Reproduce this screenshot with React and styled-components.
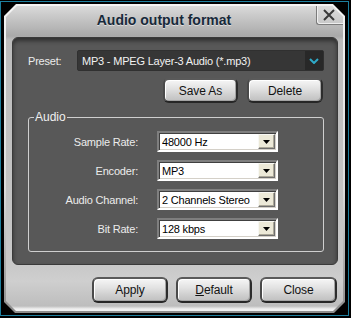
import React from "react";
import styled, { createGlobalStyle } from "styled-components";

const Global = createGlobalStyle`
  html, body { margin: 0; padding: 0; background: #000; }
  body { font-family: "Liberation Sans", Arial, sans-serif; }
  * { box-sizing: border-box; }
`;

const Glow = styled.div`
  margin-top: 1px;
  width: 349px;
  border: 1px solid #1d7f9e;
  padding: 2px 3px 2px 3px;
`;

const chamfer = (a, b) =>
  `polygon(${a}px 0, calc(100% - ${a}px) 0, 100% ${a}px, 100% calc(100% - ${b}px), calc(100% - ${b}px) 100%, ${b}px 100%, 0 calc(100% - ${b}px), 0 ${a}px)`;

const FrameOuter = styled.div`
  width: 341px;
  height: 309px;
  padding: 2px;
  background: linear-gradient(#f4f4f4, #dcdcdc 60%, #8c8c8c);
  clip-path: ${chamfer(12, 11)};
`;

const FrameInner = styled.div`
  height: 100%;
  display: flex;
  flex-direction: column;
  clip-path: ${chamfer(11, 10)};
  background: linear-gradient(
    #dadada 0px,
    #c6c6c6 12px,
    #a9a9a9 30px,
    #bcbcbc 34px,
    #c4c4c4 200px,
    #c9c9c9 262px,
    #cfcfcf 275px,
    #bdbdbd 300px,
    #f0f0f0 303px,
    #f0f0f0 305px
  );
`;

const TitleBar = styled.div`
  height: 31px;
  display: flex;
  align-items: flex-start;
`;

const Title = styled.div`
  flex: 1;
  padding: 5px 0 0 6px;
  text-align: center;
  font-family: "Liberation Sans", Arial, sans-serif;
  font-weight: 700;
  font-size: 14px;
  line-height: 18px;
  color: #17293a;
  text-shadow: 0 1px 0 rgba(255, 255, 255, 0.55);
`;

const CloseBox = styled.div`
  width: 27px;
  height: 21px;
  margin-top: -2px;
  border-left: 1px solid #7c7c7c;
  border-bottom: 1px solid #7c7c7c;
  border-bottom-left-radius: 3px;
  box-shadow: inset 1px -1px 0 #eeeeee;
  background: linear-gradient(#dedede, #c8c8c8);
  display: flex;
  align-items: center;
  justify-content: center;
  padding: 2px 2px 0 0;
`;

const Panel = styled.div`
  margin: 0 5px 0 6px;
  height: 228px;
  background: #585858;
  border: 1px solid #3a3a3a;
  border-radius: 6px;
  box-shadow: inset 0 3px 4px rgba(0, 0, 0, 0.45);
  padding: 12px 13px 0 15px;
  display: flex;
  flex-direction: column;
`;

const PresetRow = styled.div`
  display: flex;
  align-items: center;
  height: 21px;
`;

const Label = styled.span`
  color: #ececec;
  font-size: 11px;
  letter-spacing: -0.2px;
  white-space: nowrap;
`;

const PresetLabel = styled(Label)`
  width: 49px;
`;

const DarkSelect = styled.div`
  flex: 1;
  height: 21px;
  display: flex;
  align-items: center;
  background: #363636;
  border: 1px solid #303030;
  border-radius: 2px;
  color: #f2f2f2;
  font-size: 11px;
  letter-spacing: -0.2px;
  padding-left: 4px;
`;

const DarkSelectText = styled.span`
  flex: 1;
  white-space: nowrap;
`;

const Chevron = styled.div`
  width: 18px;
  height: 19px;
  background: #282828;
  display: flex;
  align-items: center;
  justify-content: center;
`;

const ButtonRow = styled.div`
  display: flex;
  justify-content: flex-end;
  gap: 9px;
  margin-top: 7px;
  padding-right: 1px;
`;

const Btn = styled.button`
  width: ${(p) => p.$w}px;
  height: ${(p) => p.$h}px;
  padding: 0;
  border: 2px solid;
  border-color: #5a5a5a #2c2c2c #262626 #4a4a4a;
  border-radius: 6px;
  background: linear-gradient(#f6f6f6, #e2e2e2 40%, #cdcdcd 75%, #c0c0c0);
  box-shadow: inset 1px 1px 0 #ffffff, inset -1px -1px 0 #a4a4a4;
  font-family: "Liberation Sans", Arial, sans-serif;
  font-size: 12px;
  letter-spacing: -0.1px;
  color: #121212;
`;

const Group = styled.div`
  position: relative;
  margin-top: 14px;
  height: 135px;
  width: 296px;
  border: 1px solid #cfcfcf;
  border-radius: 3px;
  padding-top: 13px;
  display: grid;
  grid-template-columns: 109px 121px;
  column-gap: 19px;
  row-gap: 8px;
  grid-auto-rows: 21px;
  align-content: start;
`;

const Legend = styled.span`
  position: absolute;
  top: -8px;
  left: 5px;
  padding: 0 1px;
  background: #585858;
  color: #f0f0f0;
  font-size: 12px;
  line-height: 14px;
`;

const RowLabel = styled(Label)`
  text-align: right;
  align-self: center;
`;

const Combo = styled.div`
  height: 21px;
  display: flex;
  align-items: center;
  background: #fff;
  border: 2px solid;
  border-color: #7f7f7f #ffffff #ffffff #7f7f7f;
  box-shadow: inset 1px 1px 0 #404040, inset -1px -1px 0 #d4d0c8;
  padding: 0 1px 0 3px;
  font-size: 11px;
  letter-spacing: -0.2px;
  color: #000;
`;

const ComboText = styled.span`
  flex: 1;
  white-space: nowrap;
  overflow: hidden;
`;

const ComboBtn = styled.div`
  flex: none;
  width: 17px;
  height: 15px;
  background: #ece9d8;
  border: 1px solid;
  border-color: #f8f8f4 #6e6e6e #6e6e6e #f8f8f4;
  box-shadow: inset -1px -1px 0 #aca899;
  display: flex;
  align-items: center;
  justify-content: center;
`;

const Footer = styled.div`
  flex: 1;
  display: flex;
  justify-content: flex-end;
  align-items: flex-start;
  gap: 8px;
  padding: 12px 6px 0 0;
`;

const Triangle = () => (
  <svg width="7" height="4" viewBox="0 0 7 4">
    <path d="M0 0h7L3.5 4z" fill="#000" />
  </svg>
);

const rows = [
  ["Sample Rate:", "48000 Hz"],
  ["Encoder:", "MP3"],
  ["Audio Channel:", "2 Channels Stereo"],
  ["Bit Rate:", "128 kbps"],
];

export default function App() {
  return (
    <>
      <Global />
      <Glow>
        <FrameOuter>
          <FrameInner>
            <TitleBar>
              <Title>Audio output format</Title>
              <CloseBox>
                <svg width="12" height="12" viewBox="0 0 12 12">
                  <path d="M1 1L11 11M11 1L1 11" stroke="#3a3a3a" strokeWidth="2" />
                </svg>
              </CloseBox>
            </TitleBar>
            <Panel>
              <PresetRow>
                <PresetLabel>Preset:</PresetLabel>
                <DarkSelect>
                  <DarkSelectText>MP3 - MPEG Layer-3 Audio (*.mp3)</DarkSelectText>
                  <Chevron>
                    <svg width="10" height="6" viewBox="0 0 10 6">
                      <path d="M1 1L5 5L9 1" stroke="#2fa9c8" strokeWidth="2" fill="none" />
                    </svg>
                  </Chevron>
                </DarkSelect>
              </PresetRow>
              <ButtonRow>
                <Btn $w={75} $h={25}>Save As</Btn>
                <Btn $w={76} $h={25}>Delete</Btn>
              </ButtonRow>
              <Group>
                <Legend>Audio</Legend>
                {rows.map(([l, v]) => (
                  <React.Fragment key={l}>
                    <RowLabel>{l}</RowLabel>
                    <Combo>
                      <ComboText>{v}</ComboText>
                      <ComboBtn>
                        <Triangle />
                      </ComboBtn>
                    </Combo>
                  </React.Fragment>
                ))}
              </Group>
            </Panel>
            <Footer>
              <Btn $w={76} $h={26}>Apply</Btn>
              <Btn $w={76} $h={26}>
                <u>D</u>efault
              </Btn>
              <Btn $w={77} $h={26}>Close</Btn>
            </Footer>
          </FrameInner>
        </FrameOuter>
      </Glow>
    </>
  );
}
